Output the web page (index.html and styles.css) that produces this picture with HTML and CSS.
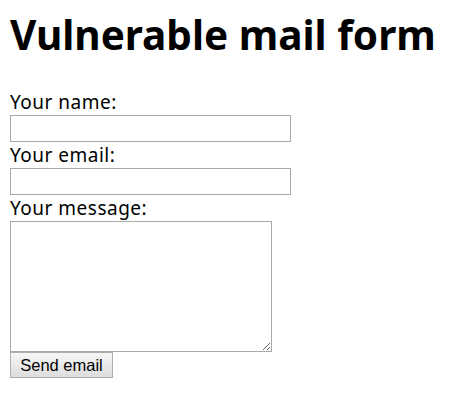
FILE: index.html
```html
<!DOCTYPE html>
<html>
<head>
<meta charset="utf-8">
<title>Vulnerable mail form</title>
<link rel="stylesheet" href="styles.css">
</head>
<body>
<h1 class="title">Vulnerable mail form</h1>
<form class="mail-form">
  <label class="field-label" for="name">Your name:</label>
  <input class="text-input" id="name" type="text">
  <label class="field-label" for="email">Your email:</label>
  <input class="text-input" id="email" type="text">
  <label class="field-label" for="message">Your message:</label>
  <textarea class="message-input" id="message"></textarea>
  <button class="send-button" type="button">Send email</button>
</form>
</body>
</html>
```
FILE: styles.css
```css
html, body {
  margin: 0;
  background: #fff;
}
body {
  padding: 0 10px;
  font-family: "Noto Sans", "Open Sans", sans-serif;
  color: #000;
}
.title {
  margin: 0;
  padding-top: 8px;
  height: 80px;
  box-sizing: border-box;
  font-size: 40.5px;
  line-height: 54px;
  font-weight: bold;
}
.mail-form {
  display: flex;
  flex-direction: column;
  align-items: flex-start;
  margin: 0;
  padding-top: 9px;
}
.field-label {
  font-size: 19px;
  letter-spacing: 0.5px;
  line-height: 26px;
  height: 26px;
}
.text-input {
  box-sizing: border-box;
  width: 281px;
  height: 27px;
  margin: 0;
  border: 1px solid #a9a9a9;
  padding: 2px;
}
.message-input {
  box-sizing: border-box;
  width: 262px;
  height: 131px;
  margin: 0;
  border: 1px solid #a9a9a9;
  padding: 2px;
  resize: both;
}
.send-button {
  box-sizing: border-box;
  width: 103px;
  height: 26px;
  margin: 0;
  padding: 0;
  font-family: "Liberation Sans", Arial, sans-serif;
  font-size: 16.5px;
  color: #000;
  border: 1px solid #adadad;
  background: linear-gradient(#f6f6f6, #dddddd);
  border-radius: 0;
}
```
